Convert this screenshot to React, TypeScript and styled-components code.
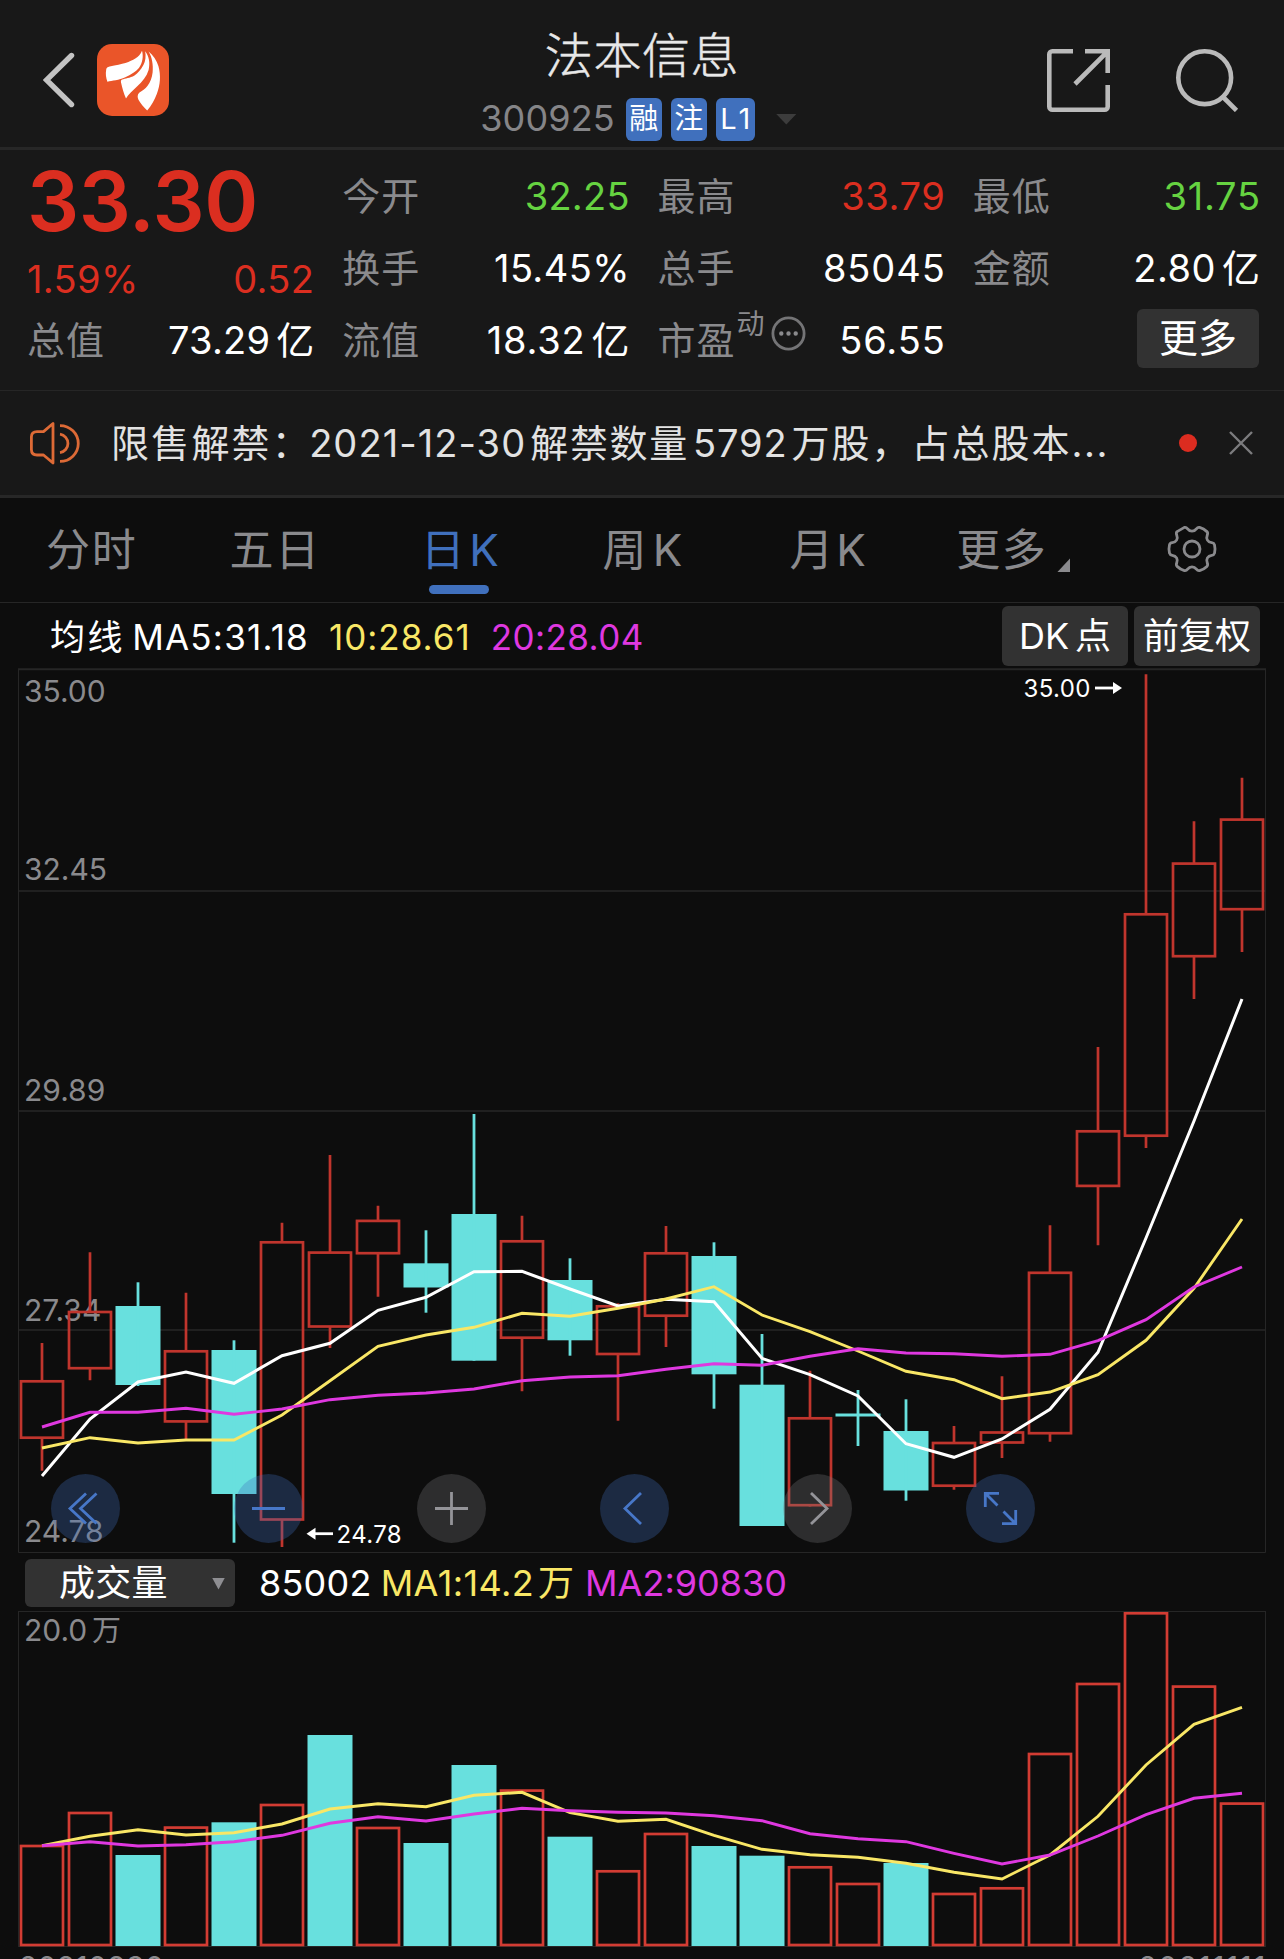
import React from "react";
import styled, { createGlobalStyle, css } from "styled-components";

const color = {
  panel: "#181818",
  ground: "#0d0d0d",
  line: "#262626",
  thickLine: "#272727",
  chip: "#323232",
  muted: "#8a8a8d",
  text: "#e8e8e8",
  white: "#ffffff",
  red: "#db2e20",
  green: "#66d341",
  blue: "#4070bd",
  yellow: "#f9e766",
  magenta: "#df38e0",
  cyan: "#68e0de",
  candleRed: "#c0352d",
  volumeRed: "#d23c33",
};

const GlobalStyle = createGlobalStyle`
  * { box-sizing: border-box; }
  body {
    margin: 0;
    background: ${color.ground};
    font-family: Inter, "Noto Sans CJK SC", sans-serif;
    -webkit-font-smoothing: antialiased;
  }
`;

const Screen = styled.main`
  display: flex;
  flex-direction: column;
  width: 1284px;
  height: 1959px;
  overflow: hidden;
  background: ${color.ground};
  color: ${color.white};
  line-height: 1.2;
  white-space: nowrap;

  > * {
    flex-shrink: 0;
  }
`;

/* ---------- header ---------- */

const Header = styled.header`
  display: grid;
  grid-template-columns: 1fr auto 1fr;
  height: 150px;
  background: ${color.panel};
  border-bottom: 3px solid ${color.thickLine};
`;

const HeaderSide = styled.div<{ $end?: boolean }>`
  display: flex;
  align-items: center;
  height: 72px;
  margin-top: 44px;
  ${(p) =>
    p.$end
      ? css`
          justify-content: flex-end;
          gap: 66px;
          padding-right: 45px;
        `
      : css`
          gap: 22px;
          padding-left: 43px;
        `}
`;

const HeaderCenter = styled.div`
  display: flex;
  flex-direction: column;
  align-items: center;
  padding-top: 26px;
`;

const StockName = styled.h1`
  margin: 0 0 11px;
  font-size: 48px;
  font-weight: 300;
  line-height: 60px;
  letter-spacing: 0.6px;
  color: ${color.text};
  -webkit-text-stroke: 0.5px ${color.text};
`;

const CodeLine = styled.div`
  display: flex;
  align-items: center;
  gap: 9px;
  height: 44px;
  margin-left: -7px;
`;

const StockCode = styled.span`
  margin-right: 2px;
  font-size: 36px;
  letter-spacing: 0.13px;
  color: #858588;
`;

const Badge = styled.span<{ $latin?: boolean }>`
  display: flex;
  align-items: center;
  justify-content: center;
  width: ${(p) => (p.$latin ? 39 : 36)}px;
  height: 43px;
  padding-top: 1px;
  border-radius: 6px;
  background: ${color.blue};
  font-size: 29px;
  ${(p) =>
    p.$latin &&
    css`
      letter-spacing: 3px;
      text-indent: 3px;
    `}
`;

const Caret = styled.i<{ $w: number; $h: number; $color: string }>`
  width: ${(p) => p.$w}px;
  height: ${(p) => p.$h}px;
  background: ${(p) => p.$color};
  clip-path: polygon(0 0, 100% 0, 50% 100%);
`;

const CodeCaret = styled(Caret)`
  margin-left: 12px;
`;

/* ---------- quote figures ---------- */

const Quote = styled.section`
  display: grid;
  grid-template-columns: repeat(4, 1fr);
  column-gap: 28px;
  height: 241px;
  padding: 11px 24px 0 27px;
  background: ${color.panel};
  border-bottom: 1px solid ${color.line};
`;

const QuoteColumn = styled.div`
  display: flex;
  flex-direction: column;
`;

const Price = styled.strong`
  height: 82px;
  font-size: 82px;
  font-weight: 600;
  line-height: 82px;
  letter-spacing: -0.4px;
  color: ${color.red};
`;

const Change = styled.div`
  display: flex;
  justify-content: space-between;
  height: 76px;
  font-size: 38px;
  line-height: 73px;
  letter-spacing: 0.35px;
  color: ${color.red};
`;

const Figure = styled.div<{ $short?: boolean }>`
  display: flex;
  align-items: center;
  justify-content: space-between;
  height: ${(p) => (p.$short ? 44 : 72)}px;
  font-size: 38px;
`;

const FigureLabel = styled.span`
  display: flex;
  letter-spacing: 1px;
  color: ${color.muted};
`;

const FigureValue = styled.span<{ $color?: string; $track?: number }>`
  color: ${(p) => p.$color ?? color.white};
  letter-spacing: ${(p) => p.$track ?? 0.2}px;
  margin-right: ${(p) => -(p.$track ?? 0.2)}px;
`;

const Unit = styled.span`
  margin-left: 6px;
`;

const Superscript = styled.sup`
  margin: -16px 0 0 1px;
  align-self: flex-start;
  font-size: 28px;
  line-height: 44px;
`;

const InfoIcon = styled.svg`
  align-self: center;
  margin: -16px 0 0 5px;
`;

const MoreButton = styled.button`
  width: 122px;
  height: 59px;
  margin: -5px 1px 0 auto;
  padding: 0 0 1px;
  border: 0;
  border-radius: 6px;
  background: ${color.chip};
  color: ${color.white};
  font: 400 39px/1.2 Inter, "Noto Sans CJK SC", sans-serif;
`;

/* ---------- announcement ---------- */

const Notice = styled.section`
  display: flex;
  align-items: center;
  height: 107px;
  padding: 0 31px 1px 29px;
  background: ${color.panel};
  border-bottom: 3px solid ${color.thickLine};
`;

const NoticeText = styled.p`
  display: flex;
  margin: 0 auto 0 30px;
  font-size: 38px;
  line-height: 60px;
  color: #e2e2e2;
`;

const NoticePart = styled.span<{ $track: number; $before?: number }>`
  letter-spacing: ${(p) => p.$track}px;
  margin-left: ${(p) => p.$before ?? 0}px;
`;

const UnreadDot = styled.i`
  width: 18px;
  height: 18px;
  margin-right: 32px;
  border-radius: 50%;
  background: #dc2c20;
`;

/* ---------- period tabs ---------- */

const Tabs = styled.nav`
  display: grid;
  grid-template-columns: repeat(7, 1fr);
  height: 105px;
  border-bottom: 1px solid ${color.line};
`;

const Tab = styled.div<{ $active?: boolean }>`
  display: flex;
  flex-direction: column;
  align-items: center;
  height: 104px;
  padding-top: 22px;
  color: ${(p) => (p.$active ? color.blue : color.muted)};
`;

const TabLabel = styled.span<{ $gap?: number; $shift?: number }>`
  display: flex;
  gap: ${(p) => p.$gap ?? 0}px;
  padding-left: ${(p) => p.$shift ?? 0}px;
  font-size: 44px;
  line-height: 60px;
  letter-spacing: 1.6px;
`;

const ActiveBar = styled.i`
  width: 60px;
  height: 9px;
  margin-top: 5px;
  border-radius: 4.5px;
  background: ${color.blue};
`;

const CornerMark = styled.i`
  align-self: flex-end;
  width: 13px;
  height: 14px;
  margin: 0 0 8px 10px;
  background: ${color.muted};
  clip-path: polygon(100% 0, 100% 100%, 0 100%);
`;

const SettingsIcon = styled.svg`
  margin-top: 3px;
`;

/* ---------- charts ---------- */

const Legend = styled.div`
  display: flex;
  align-items: center;
  height: 65px;
  padding: 3px 24px 0 50px;
  font-size: 35px;
`;

const LegendItem = styled.span<{
  $color?: string;
  $track?: number;
  $before?: number;
}>`
  color: ${(p) => p.$color ?? color.white};
  letter-spacing: ${(p) => p.$track ?? 0}px;
  margin-left: ${(p) => p.$before ?? 0}px;
`;

const ChipGroup = styled.div`
  display: flex;
  gap: 6px;
  margin: -2px 0 0 auto;
`;

const Chip = styled.button`
  display: flex;
  align-items: center;
  justify-content: center;
  gap: 6px;
  width: 126px;
  height: 60px;
  padding: 1px 0 0;
  border: 0;
  border-radius: 6px;
  background: ${color.chip};
  color: ${color.white};
  font: 400 36px/1.2 Inter, "Noto Sans CJK SC", sans-serif;
`;

const Plot = styled.div`
  position: relative;
  display: flex;
  margin: 0 18px;
`;

const PlotText = styled.text<{ $size?: number; $color?: string }>`
  font-size: ${(p) => p.$size ?? 30}px;
  letter-spacing: ${(p) => (p.$size ? 0.4 : 0)}px;
  fill: ${(p) => p.$color ?? color.muted};
`;

const Controls = styled.div`
  position: absolute;
  left: 33px;
  top: 806px;
  display: flex;
  gap: 114px;
`;

const ControlButton = styled.button<{ $dim?: boolean }>`
  display: flex;
  width: 69px;
  height: 69px;
  padding: 0;
  border: 0;
  border-radius: 50%;
  color: ${(p) => (p.$dim ? "#949499" : "#4777c8")};
  background: ${(p) =>
    p.$dim ? "rgba(118, 118, 122, 0.3)" : "rgba(63, 110, 190, 0.3)"};
`;

const VolumeLegend = styled.div`
  display: flex;
  align-items: center;
  height: 58px;
  padding: 3px 0 0 25px;
  font-size: 36px;
`;

const IndicatorSelect = styled.div`
  display: flex;
  align-items: center;
  justify-content: space-between;
  width: 210px;
  height: 48px;
  margin: -1px 24px 0 0;
  padding: 1px 10px 0 34px;
  border-radius: 6px;
  background: ${color.chip};
`;

const SelectLabel = styled.span`
  letter-spacing: 0.25px;
`;

const Dates = styled.footer`
  display: flex;
  justify-content: space-between;
  padding: 0 17px 0 19px;
  font-size: 30px;
  line-height: 40px;
  color: ${color.muted};
`;

const DateText = styled.span<{ $track: number }>`
  letter-spacing: ${(p) => p.$track}px;
`;

/* ---------- data ---------- */

const STEP = 48;
const FIRST = 42;
const HALF = 21;
const xAt = (i: number) => FIRST + i * STEP;

type Candle = {
  up: boolean;
  top: number;
  bottom: number;
  high: number;
  low: number;
};

const candle = (
  up: number,
  top: number,
  bottom: number,
  high: number,
  low: number
): Candle => ({ up: up === 1, top, bottom, high, low });

const candles: Candle[] = [
  candle(1, 1380, 1439, 1343, 1470.7),
  candle(1, 1310.7, 1369.5, 1252.3, 1380.3),
  candle(0, 1306, 1385, 1282.3, 1386),
  candle(1, 1350, 1422.7, 1292.7, 1439.3),
  candle(0, 1350, 1494, 1340.3, 1542.7),
  candle(1, 1241, 1520.8, 1222.7, 1547),
  candle(1, 1251.3, 1327.8, 1155, 1348),
  candle(1, 1219.6, 1254.5, 1205.7, 1296.7),
  candle(0, 1263.3, 1287.5, 1230.3, 1312.7),
  candle(0, 1214, 1360.7, 1114, 1360.7),
  candle(1, 1240, 1339, 1215.7, 1391.3),
  candle(0, 1280, 1340.3, 1258.3, 1355.7),
  candle(1, 1305, 1355.3, 1303.3, 1420.7),
  candle(1, 1252, 1317, 1226, 1347),
  candle(0, 1256, 1374.3, 1242.3, 1408.7),
  candle(0, 1384.7, 1526, 1334, 1526),
  candle(1, 1417, 1506.5, 1370.7, 1506.5),
  candle(0, 1413.5, 1416.5, 1390, 1446),
  candle(0, 1431, 1490.5, 1399.3, 1500.7),
  candle(1, 1441.7, 1487, 1426, 1489.7),
  candle(1, 1431.2, 1443.8, 1376.3, 1458),
  candle(1, 1271.5, 1434.5, 1225.3, 1441.7),
  candle(1, 1130, 1187.2, 1047, 1245.3),
  candle(1, 913, 1137, 674.3, 1148),
  candle(1, 862.3, 957.5, 821.3, 999),
  candle(1, 818.3, 910.5, 777.7, 952),
];

const ma5 = [
  1476, 1419, 1382, 1372, 1383.3, 1355.7, 1343.3, 1310.3, 1297.3, 1271.7,
  1271.3, 1289, 1306, 1299.3, 1301.7, 1358.3, 1374.7, 1396, 1443.7, 1457.3,
  1439, 1409.3, 1352.3, 1238, 1121, 999,
];
const ma10 = [
  1448, 1437.7, 1443, 1440, 1440, 1415, 1380.7, 1346.3, 1335, 1327.3, 1313.3,
  1316.3, 1308.3, 1299, 1286.7, 1315, 1331.7, 1351, 1371.3, 1379.7, 1398.7,
  1392, 1374.7, 1340.3, 1288.3, 1219,
];
const ma20 = [
  1427, 1412.3, 1412.3, 1408.3, 1414.3, 1409, 1399.7, 1395.3, 1393, 1389,
  1380.7, 1377, 1375.7, 1369.3, 1363.7, 1365.3, 1356.3, 1348.7, 1353, 1353.7,
  1356.3, 1354.3, 1340.7, 1319.7, 1287, 1267,
];

const volumes: [number, number][] = [
  [1, 1844.7], [1, 1811.7], [0, 1855], [1, 1826.3], [0, 1822.3], [1, 1803.7],
  [0, 1735], [1, 1826.7], [0, 1843], [0, 1765], [1, 1789.3], [0, 1836.7],
  [1, 1870], [1, 1832.7], [0, 1846], [0, 1855.7], [1, 1866], [1, 1882.7],
  [0, 1863], [1, 1892.7], [1, 1887], [1, 1752.7], [1, 1682.7], [1, 1612],
  [1, 1685.3], [1, 1802.3],
];
const volumeMa1 = [
  1845.7, 1836.3, 1829.7, 1835, 1832.7, 1824, 1809, 1803.7, 1806.7, 1795.3,
  1792.3, 1812.7, 1821.3, 1819.3, 1835.3, 1849.3, 1854.7, 1857.3, 1863.3,
  1872.3, 1879, 1855, 1816.3, 1765, 1724.3, 1707.3,
];
const volumeMa2 = [
  1845.7, 1841.7, 1846, 1844.7, 1841.7, 1835.3, 1823.3, 1816.7, 1821, 1814,
  1808.3, 1810.7, 1812.3, 1813, 1815.7, 1820.7, 1833.7, 1838.7, 1841.7,
  1853.3, 1864, 1855, 1836, 1814.7, 1798.3, 1793.3,
];

const toPoints = (ys: number[]) =>
  ys.map((y, i) => `${xAt(i)},${y}`).join(" ");

const axis: [string, number][] = [
  ["35.00", 702],
  ["32.45", 880],
  ["29.89", 1101],
  ["27.34", 1321],
  ["24.78", 1542],
];

const rotate = (x: number, y: number, deg: number) => {
  const a = (deg * Math.PI) / 180;
  return `${(x * Math.cos(a) - y * Math.sin(a)).toFixed(2)} ${(
    x * Math.sin(a) +
    y * Math.cos(a)
  ).toFixed(2)}`;
};

const gearPath =
  [0, 60, 120, 180, 240, 300]
    .map((d, i) => {
      const r = (x: number, y: number) => rotate(x, y, d);
      const start = i
        ? `Q${r(-11.8, -20.4)} ${r(-7.6, -21.6)}`
        : `M${r(-7.6, -21.6)}`;
      return `${start} C${r(-4, -22.6)} ${r(-5, -17.8)} ${r(0, -17.8)} C${r(
        5,
        -17.8
      )} ${r(4, -22.6)} ${r(7.6, -21.6)}`;
    })
    .join(" ") + "Z";

/* ---------- drawings ---------- */

const BackIcon = () => (
  <svg width="32" height="56" viewBox="0 0 32 56" fill="none">
    <path d="M28.5 3.5 3.5 28l25 24.5" stroke="#c3c3c3" strokeWidth="5.4" strokeLinecap="round" />
  </svg>
);

const Logo = () => (
  <svg width="72" height="72" viewBox="0 0 72 72">
    <rect width="72" height="72" rx="15" fill="#ea5529" />
    <g fill="#fff">
      <path d="M45 6.7C43.5 10.5 41.5 12.5 38.3 14.6 33 18 26 20.2 12.6 22.6 10.4 23 9.6 23.8 9.2 25.6 8.4 30 9 34 10.4 37.8 15 36.4 22 36.2 28.3 33.2 34 30.6 38.6 28 41.9 24 45.6 19 46.6 12 45 6.7Z" />
      <path d="M48.2 7.2C49 12 48.6 17 46.4 21 44 25.4 41 29 37.5 31.4 33 34 28 34.4 25.2 35.4 23.6 36 23.8 37.6 24.2 39.3 25.2 44 26.6 49 29 54.5 31 50.5 36 46.5 40 42.6 45.5 37.6 49.6 32.5 51.6 26 53.3 19 52 12 48.2 7.2Z" />
      <path d="M51.6 7.6C56 11.5 59.8 16.5 61.4 22 64 31 63.4 41 59.8 50 57.4 56 54.4 62 50.2 66.4 46.8 63.5 43.8 59.6 41.6 56 40.3 53.6 40.2 50.6 42.2 48.8 45 46.6 48.4 45 50.4 42 53.4 38 55 33.6 55.6 28.5 56.4 21 55 13 51.6 7.6Z" />
    </g>
  </svg>
);

const ShareIcon = () => (
  <svg width="63" height="63" viewBox="0 0 63 63" fill="none" stroke="#bababa" strokeWidth="4.6">
    <path d="M26 2.3H5.3a3 3 0 0 0-3 3v52.4a3 3 0 0 0 3 3h52.4a3 3 0 0 0 3-3V36" />
    <path d="M38 2.3h22.7V24M60.7 2.3 28 35" />
  </svg>
);

const SearchIcon = () => (
  <svg width="63" height="63" viewBox="0 0 63 63" fill="none" stroke="#bababa" strokeWidth="4.6">
    <circle cx="28.7" cy="28.7" r="26.4" />
    <path d="M46.5 47.5 60.5 61.5" />
  </svg>
);

const SpeakerIcon = () => (
  <svg width="52" height="44" viewBox="29 420 52 44" fill="none" stroke="#dd6a36" strokeWidth="2.8" strokeLinejoin="round">
    <path d="M53 422.5V462L43.5 454H37Q31.4 454 31.4 448.5V436Q31.4 430.6 37 430.6H43.5Z" />
    <path d="M60 433.2A9.3 9.3 0 0 1 60 451.6M60 424.6A18.3 17.9 0 0 1 60 460.4" />
  </svg>
);

const CloseIcon = () => (
  <svg width="24" height="24" viewBox="0 0 24 24" stroke="#7c7c7e" strokeWidth="2.4">
    <path d="M1 1 23 23M23 1 1 23" />
  </svg>
);

const GearIcon = () => (
  <SettingsIcon width="52" height="52" viewBox="-26 -26 52 52" fill="none" stroke={color.muted} strokeWidth="2.8" strokeLinejoin="round">
    <path d={gearPath} />
    <circle r="8" />
  </SettingsIcon>
);

const ControlIcon = ({ d }: { d: string }) => (
  <svg width="69" height="69" viewBox="-34.5 -34.5 69 69" fill="none" stroke="currentColor" strokeWidth="2.8">
    <path d={d} />
  </svg>
);

const controls: { d: string; dim?: boolean }[] = [
  { d: "M.5-15-15.5 0 .5 15M11-15-5 0 11 15" },
  { d: "M-16.5 0h33" },
  { d: "M-16.5 0h33M0-16.5v33", dim: true },
  { d: "M6.5-15.5-9.5 0 6.5 15.5" },
  { d: "M-6.5-15.5 9.5 0-6.5 15.5", dim: true },
  { d: "M-15.2-1.5v-13.7h13.7M-15.2-15.2-3-3M15.2 1.5v13.7H1.5M15.2 15.2 3 3" },
];

const PriceChart = () => (
  <svg width="1248" height="885" viewBox="18 668 1248 885" fill="none">
    <path d="M18 669.3H1266" stroke="#262626" strokeWidth="2" />
    <path d="M18.5 669V1552.5H1265.5V669" stroke="#262626" />
    {[891, 1111, 1330].map((y) => (
      <path key={y} d={`M19 ${y}H1265`} stroke="#202020" strokeWidth="2" />
    ))}
    {axis.map(([label, y]) => (
      <PlotText key={label} x="24" y={y}>{label}</PlotText>
    ))}
    {candles.map((c, i) => {
      const x = xAt(i);
      return c.up ? (
        <g key={i} stroke={color.candleRed} strokeWidth="2.7">
          <rect x={x - HALF} y={c.top + 1.3} width={HALF * 2} height={c.bottom - c.top - 2.6} />
          <path d={`M${x} ${c.high}V${c.top + 1}M${x} ${c.bottom - 1}V${c.low}`} />
        </g>
      ) : (
        <g key={i}>
          <rect x={x - 22.5} y={c.top} width="45" height={c.bottom - c.top} fill={color.cyan} />
          <path d={`M${x} ${c.high}V${c.low}`} stroke={color.cyan} strokeWidth="2.8" />
        </g>
      );
    })}
    <polyline points={toPoints(ma5)} stroke="#fff" strokeWidth="3" />
    <polyline points={toPoints(ma10)} stroke={color.yellow} strokeWidth="2.9" />
    <polyline points={toPoints(ma20)} stroke={color.magenta} strokeWidth="2.9" />
    <PlotText x="1023.5" y="697" $size={24} $color="#fff">35.00</PlotText>
    <path d="M1095 688H1115" stroke="#fff" strokeWidth="2.8" />
    <path d="M1113 682 1122 688 1113 694Z" fill="#fff" />
    <path d="M333 1533.7H313" stroke="#fff" strokeWidth="2.8" />
    <path d="M315.5 1527.7 306.5 1533.7 315.5 1539.7Z" fill="#fff" />
    <PlotText x="336.5" y="1542.7" $size={24} $color="#fff">24.78</PlotText>
  </svg>
);

const VolumeChart = () => (
  <svg width="1248" height="336" viewBox="18 1611 1248 336" fill="none">
    <rect x="18.5" y="1611.5" width="1247" height="335" stroke="#262626" />
    <PlotText x="24" y="1641">20.0</PlotText>
    <PlotText x="92" y="1641" $size={29}>万</PlotText>
    {volumes.map(([up, y], i) =>
      up ? (
        <rect key={i} x={xAt(i) - HALF} y={y + 1.3} width={HALF * 2} height={1943.7 - y} stroke={color.volumeRed} strokeWidth="2.7" />
      ) : (
        <rect key={i} x={xAt(i) - 22.5} y={y} width="45" height={1946 - y} fill={color.cyan} />
      )
    )}
    <polyline points={toPoints(volumeMa1)} stroke={color.yellow} strokeWidth="2.9" />
    <polyline points={toPoints(volumeMa2)} stroke={color.magenta} strokeWidth="2.9" />
  </svg>
);

/* ---------- page ---------- */

const App = () => (
  <>
    <GlobalStyle />
    <Screen>
      <Header>
        <HeaderSide>
          <BackIcon />
          <Logo />
        </HeaderSide>
        <HeaderCenter>
          <StockName>法本信息</StockName>
          <CodeLine>
            <StockCode>300925</StockCode>
            <Badge>融</Badge>
            <Badge>注</Badge>
            <Badge $latin>L1</Badge>
            <CodeCaret $w={21} $h={11} $color="#3c3c3c" />
          </CodeLine>
        </HeaderCenter>
        <HeaderSide $end>
          <ShareIcon />
          <SearchIcon />
        </HeaderSide>
      </Header>

      <Quote>
        <QuoteColumn>
          <Price>33.30</Price>
          <Change>
            <span>1.59%</span>
            <span>0.52</span>
          </Change>
          <Figure $short>
            <FigureLabel>总值</FigureLabel>
            <FigureValue>73.29<Unit>亿</Unit></FigureValue>
          </Figure>
        </QuoteColumn>
        <QuoteColumn>
          <Figure>
            <FigureLabel>今开</FigureLabel>
            <FigureValue $color={color.green}>32.25</FigureValue>
          </Figure>
          <Figure>
            <FigureLabel>换手</FigureLabel>
            <FigureValue $track={0.4}>15.45%</FigureValue>
          </Figure>
          <Figure>
            <FigureLabel>流值</FigureLabel>
            <FigureValue $track={0.8}>18.32<Unit>亿</Unit></FigureValue>
          </Figure>
        </QuoteColumn>
        <QuoteColumn>
          <Figure>
            <FigureLabel>最高</FigureLabel>
            <FigureValue $color={color.red} $track={0.6}>33.79</FigureValue>
          </Figure>
          <Figure>
            <FigureLabel>总手</FigureLabel>
            <FigureValue $track={0.9}>85045</FigureValue>
          </Figure>
          <Figure>
            <FigureLabel>
              市盈
              <Superscript>动</Superscript>
              <InfoIcon width="35" height="35" viewBox="0 0 35 35" fill="none">
                <circle cx="17.5" cy="17.5" r="15.6" stroke="#747476" strokeWidth="2.8" />
                <path d="M10.3 17.5h.01M17.5 17.5h.01M24.7 17.5h.01" stroke="#8a8a8d" strokeWidth="4.4" strokeLinecap="round" />
              </InfoIcon>
            </FigureLabel>
            <FigureValue $track={0.9}>56.55</FigureValue>
          </Figure>
        </QuoteColumn>
        <QuoteColumn>
          <Figure>
            <FigureLabel>最低</FigureLabel>
            <FigureValue $color={color.green} $track={0.7}>31.75</FigureValue>
          </Figure>
          <Figure>
            <FigureLabel>金额</FigureLabel>
            <FigureValue $track={0.5}>2.80<Unit>亿</Unit></FigureValue>
          </Figure>
          <Figure>
            <MoreButton>更多</MoreButton>
          </Figure>
        </QuoteColumn>
      </Quote>

      <Notice>
        <SpeakerIcon />
        <NoticeText>
          <NoticePart $track={2.2}>限售解禁</NoticePart>
          <NoticePart $track={-0.7}>：</NoticePart>
          <NoticePart $track={1.07}>2021-12-30</NoticePart>
          <NoticePart $track={1.67} $before={4}>解禁数量</NoticePart>
          <NoticePart $track={0.9} $before={4}>5792</NoticePart>
          <NoticePart $track={2} $before={4}>万股，占总股本</NoticePart>
          <NoticePart $track={1.55}>...</NoticePart>
        </NoticeText>
        <UnreadDot />
        <CloseIcon />
      </Notice>

      <Tabs>
        <Tab><TabLabel>分时</TabLabel></Tab>
        <Tab><TabLabel>五日</TabLabel></Tab>
        <Tab $active>
          <TabLabel $gap={3} $shift={4}><span>日</span><span>K</span></TabLabel>
          <ActiveBar />
        </Tab>
        <Tab><TabLabel $gap={4.5} $shift={2.5}><span>周</span><span>K</span></TabLabel></Tab>
        <Tab><TabLabel $gap={1} $shift={6}><span>月</span><span>K</span></TabLabel></Tab>
        <Tab><TabLabel $shift={9}>更多<CornerMark /></TabLabel></Tab>
        <Tab><GearIcon /></Tab>
      </Tabs>

      <Legend>
        <LegendItem $track={2.6}>均线</LegendItem>
        <LegendItem $track={1.2} $before={7}>MA5:31.18</LegendItem>
        <LegendItem $color={color.yellow} $track={1} $before={20}>10:28.61</LegendItem>
        <LegendItem $color={color.magenta} $track={0.43} $before={20}>20:28.04</LegendItem>
        <ChipGroup>
          <Chip><span>DK</span><span>点</span></Chip>
          <Chip>前复权</Chip>
        </ChipGroup>
      </Legend>
      <Plot>
        <PriceChart />
        <Controls>
          {controls.map((c) => (
            <ControlButton key={c.d} $dim={c.dim}>
              <ControlIcon d={c.d} />
            </ControlButton>
          ))}
        </Controls>
      </Plot>

      <VolumeLegend>
        <IndicatorSelect>
          <SelectLabel>成交量</SelectLabel>
          <Caret $w={13} $h={12} $color="#8e8e92" />
        </IndicatorSelect>
        <LegendItem $track={0.23}>85002</LegendItem>
        <LegendItem $color={color.yellow} $track={0.4} $before={9}>MA1:14.2</LegendItem>
        <LegendItem $color={color.yellow} $before={4}>万</LegendItem>
        <LegendItem $color={color.magenta} $before={11}>MA2:90830</LegendItem>
      </VolumeLegend>
      <Plot>
        <VolumeChart />
      </Plot>
      <Dates>
        <DateText $track={0.3}>20210930</DateText>
        <DateText $track={1.5}>20211111</DateText>
      </Dates>
    </Screen>
  </>
);

export default App;
